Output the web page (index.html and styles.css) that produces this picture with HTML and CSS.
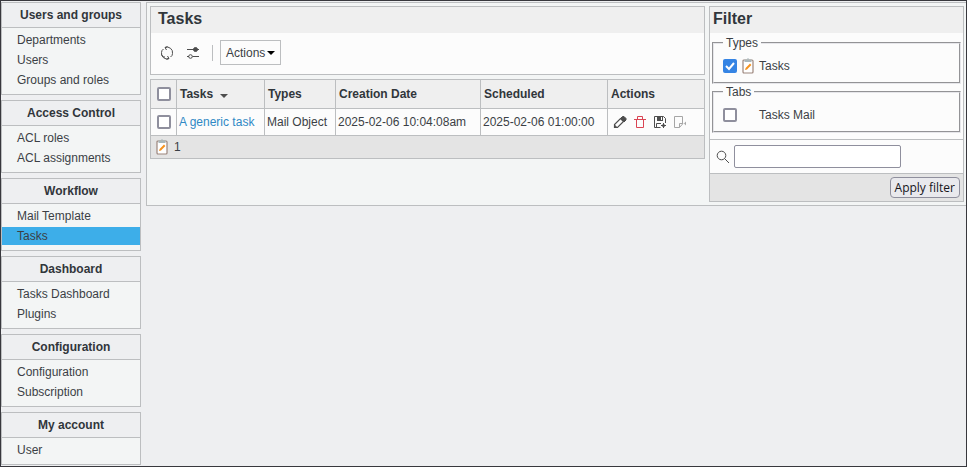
FILE: index.html
```html
<!DOCTYPE html>
<html lang="en">
<head>
    <meta charset="UTF-8">
    <meta name="viewport" content="width=device-width, initial-scale=1.0">
    <title>Tasks</title>
    <link rel="stylesheet" href="styles.css">
</head>
<body>

    <!-- Shared icons -->
    <svg class="icon-defs" aria-hidden="true">
        <symbol id="icon-task" viewBox="0 0 12 16">
            <rect x="1" y="2" width="10" height="13" rx="1" fill="#fff" stroke="#9c857c" stroke-width="1.2"/>
            <path d="M2.500 1.500h7v2.500h-7z" fill="#a9b7bb"/>
            <path d="M5 0.500h2v1H5z" fill="#a9b7bb"/>
            <path d="M3 12l.6-2L8 5.600l1.400 1.400L5 11.400z" fill="#f6921e"/>
        </symbol>
    </svg>

    <nav class="menu">
        <section class="menu-box">
            <h2>Users and groups</h2>
            <ul>
                <li><a href="#">Departments</a></li>
                <li><a href="#">Users</a></li>
                <li><a href="#">Groups and roles</a></li>
            </ul>
        </section>
        <section class="menu-box">
            <h2>Access Control</h2>
            <ul>
                <li><a href="#">ACL roles</a></li>
                <li><a href="#">ACL assignments</a></li>
            </ul>
        </section>
        <section class="menu-box">
            <h2>Workflow</h2>
            <ul>
                <li><a href="#">Mail Template</a></li>
                <li><a href="#" class="active">Tasks</a></li>
            </ul>
        </section>
        <section class="menu-box">
            <h2>Dashboard</h2>
            <ul>
                <li><a href="#">Tasks Dashboard</a></li>
                <li><a href="#">Plugins</a></li>
            </ul>
        </section>
        <section class="menu-box">
            <h2>Configuration</h2>
            <ul>
                <li><a href="#">Configuration</a></li>
                <li><a href="#">Subscription</a></li>
            </ul>
        </section>
        <section class="menu-box">
            <h2>My account</h2>
            <ul>
                <li><a href="#">User</a></li>
            </ul>
        </section>
    </nav>

    <main class="content">
        <div class="list">
            <header class="panel">
                <h1>Tasks</h1>
                <div class="toolbar">
                    <button type="button" class="icon-btn" aria-label="Reload">
                        <svg width="14" height="14" viewBox="0 0 14 14" fill="none" stroke="#4d4d4d">
                            <path d="M5 1.500A5.500 5.500 0 0 1 12.500 7.500L12 9.500M9 12.500A5.500 5.500 0 0 1 1.500 6.500L2 4.500"/>
                            <path d="M7.500 0.500L5 1.500 6.500 4M6.500 13.500L9 12.500 7.500 10"/>
                            <path d="M2 4.500L3.500 3M1.500 8.500l2 2.500H5M12 9.500L10.500 11"/>
                        </svg>
                    </button>
                    <button type="button" class="icon-btn" aria-label="Settings">
                        <svg width="14" height="14" viewBox="0 0 14 14" fill="none" stroke="#4d4d4d">
                            <path d="M1 3.500h12M1 10.500h2M6.500 10.500H13"/>
                            <circle cx="9.500" cy="3.500" r="2" fill="#4d4d4d"/>
                            <circle cx="4.500" cy="10.500" r="1.800"/>
                        </svg>
                    </button>
                    <span class="separator"></span>
                    <button type="button" class="actions-btn">Actions <span class="caret"></span></button>
                </div>
            </header>

            <table class="tasks">
                <colgroup>
                    <col class="col-check">
                    <col class="col-name">
                    <col class="col-type">
                    <col class="col-created">
                    <col class="col-scheduled">
                    <col>
                </colgroup>
                <thead>
                    <tr>
                        <th class="check"><input type="checkbox" aria-label="Select all"></th>
                        <th>Tasks <span class="caret sort"></span></th>
                        <th>Types</th>
                        <th>Creation Date</th>
                        <th>Scheduled</th>
                        <th>Actions</th>
                    </tr>
                </thead>
                <tbody>
                    <tr>
                        <td class="check"><input type="checkbox" aria-label="Select A generic task"></td>
                        <td><a href="#">A generic task</a></td>
                        <td>Mail Object</td>
                        <td>2025-02-06 10:04:08am</td>
                        <td>2025-02-06 01:00:00</td>
                        <td>
                            <div class="row-actions">
                                <button type="button" class="icon-btn" aria-label="Edit">
                                    <svg width="14" height="14" viewBox="0 0 14 14" fill="none" stroke="#4d4d4d">
                                        <path d="M1.500 12.500v-3L7.500 3.500l3 3-6 6z" stroke-width="1.200"/>
                                        <path d="M7.500 3.500l2-2H11l2 2V5l-2 2z" fill="#4d4d4d"/>
                                        <path d="M1.500 12.500v-2.500l2.500 2.500z" fill="#4d4d4d"/>
                                    </svg>
                                </button>
                                <button type="button" class="icon-btn" aria-label="Delete">
                                    <svg width="14" height="14" viewBox="0 0 14 14" fill="none" stroke="#da4453">
                                        <path d="M1 4.500h12M4.500 4V1.500h5V4M3.500 4.500v8h7v-8"/>
                                    </svg>
                                </button>
                                <button type="button" class="icon-btn" aria-label="Save snapshot">
                                    <svg width="14" height="14" viewBox="0 0 14 14" fill="none" stroke="#4d4d4d">
                                        <path d="M7.500 12.500h-6v-11h9l2 2V8M3.500 12V8.500H8"/>
                                        <path d="M4 1h6v5H4z" fill="#4d4d4d" stroke="none"/>
                                        <path d="M8.500 2v3" stroke="#fff"/>
                                        <circle cx="10.500" cy="10.500" r="1.500" fill="#4d4d4d" stroke="none"/>
                                        <path d="M10.500 8v5M8 10.500h5"/>
                                    </svg>
                                </button>
                                <button type="button" class="icon-btn" aria-label="Export" disabled>
                                    <svg width="14" height="14" viewBox="0 0 14 14" fill="none" stroke="#a6a6a6">
                                        <path d="M6.500 12.500h-5v-11h8V9M6.500 12.500v-4h3.500z"/>
                                        <path d="M11 8.500l2-2v4z" fill="#a6a6a6" stroke="none"/>
                                    </svg>
                                </button>
                            </div>
                        </td>
                    </tr>
                </tbody>
                <tfoot>
                    <tr>
                        <td colspan="6">
                            <div class="summary">
                                <svg width="12" height="16"><use href="#icon-task"/></svg>
                                <span>1</span>
                            </div>
                        </td>
                    </tr>
                </tfoot>
            </table>
        </div>

        <form class="panel filter">
            <h1>Filter</h1>
            <div class="filter-groups">
                <fieldset>
                    <legend>Types</legend>
                    <div class="option">
                        <input type="checkbox" id="filter-tasks" checked>
                        <svg width="12" height="16"><use href="#icon-task"/></svg>
                        <label for="filter-tasks">Tasks</label>
                    </div>
                </fieldset>
                <fieldset>
                    <legend>Tabs</legend>
                    <div class="option">
                        <input type="checkbox" id="filter-mail">
                        <span class="no-icon"></span>
                        <label for="filter-mail">Tasks Mail</label>
                    </div>
                </fieldset>
            </div>
            <div class="search">
                <label for="search-text" aria-label="Search">
                    <svg width="14" height="14" viewBox="0 0 14 14" fill="none" stroke="#4d4d4d">
                        <circle cx="5.500" cy="5.500" r="4.300"/>
                        <path d="M8.500 8.500l4.500 4.500"/>
                    </svg>
                </label>
                <input type="text" id="search-text">
            </div>
            <div class="filter-footer">
                <button type="submit" class="apply-btn">Apply filter</button>
            </div>
        </form>
    </main>

</body>
</html>
```

FILE: styles.css
```css
* {
    box-sizing: border-box;
}
body {
    display: flex;
    align-items: flex-start;
    gap: 5px;
    min-height: 100vh;
    margin: 0;
    padding: 1px 0;
    border: 1px solid #38383d;
    background-color: #eeeff1;
    color: #3b3f45;
    font-family: "Liberation Sans", Arial, sans-serif;
    font-size: 12px;
    line-height: 18px;
}
h1, h2, ul {
    margin: 0;
    padding: 0;
}
svg {
    display: block;
    flex: none;
}
.icon-defs {
    position: absolute;
    width: 0;
    height: 0;
}

/* Left menu */
.menu {
    display: flex;
    flex: none;
    flex-direction: column;
    gap: 5px;
    width: 140px;
}
.menu-box {
    border: 1px solid #bcbec0;
    background-color: #f3f5f5;
}
.menu-box h2 {
    border-bottom: 1px solid #bcbec0;
    background-color: #eeeff1;
    color: #31363b;
    font-size: 12px;
    line-height: 24px;
    text-align: center;
}
.menu-box ul {
    display: flex;
    flex-direction: column;
    gap: 2px;
    padding: 3px 0 5px;
    list-style: none;
}
.menu-box a {
    display: block;
    padding-left: 15px;
    color: #3b3f45;
    text-decoration: none;
}
.menu-box a.active {
    background-color: #3daee9;
}

/* Main area */
.content {
    display: flex;
    flex: 1;
    align-items: flex-start;
    gap: 4px;
    min-width: 0;
    padding: 3px 2px 3px 3px;
    border: 1px solid #bcbec0;
    border-right: none;
    background-color: #f3f5f5;
}
.list {
    display: flex;
    flex: 1;
    flex-direction: column;
    gap: 4px;
}
.panel {
    border: 1px solid #bcbec0;
    background-color: #fcfcfc;
}
.panel h1 {
    padding: 0 7px 2px;
    background-color: #efefef;
    color: #31363b;
    font-size: 16px;
    line-height: 24px;
}
.toolbar {
    display: flex;
    align-items: center;
    gap: 12px;
    padding: 7px 9px 9px;
}
.icon-btn {
    padding: 0;
    border: none;
    background: none;
}
.separator {
    width: 1px;
    height: 16px;
    background-color: #bcbec0;
}
.actions-btn {
    display: flex;
    align-items: center;
    gap: 2px;
    height: 25px;
    margin-left: -5px;
    padding: 0 5px;
    border: 1px solid #bcbec0;
    background-color: #fcfcfc;
    color: #3b3f45;
    font: inherit;
}
.caret {
    display: inline-block;
    border: 4px solid transparent;
    border-top-color: #000;
    border-bottom: none;
}
.sort {
    margin-left: 4px;
    border-top-color: #4d4d4d;
}

/* Task table */
.tasks {
    width: 100%;
    border-collapse: collapse;
    table-layout: fixed;
    background-color: #fcfcfc;
}
.tasks th, .tasks td {
    height: 27px;
    padding: 0 2px;
    border: 1px solid #bcbec0;
    text-align: left;
    white-space: nowrap;
}
.tasks th {
    height: 29px;
    padding: 0 3px;
    background-color: #efefef;
    color: #31363b;
}
.tasks .check {
    padding: 0 6px;
}
.tasks a {
    color: #2f89c5;
    text-decoration: none;
}
.tasks tfoot td {
    height: 23px;
    padding: 0 5px;
    background-color: #e4e4e4;
}
.col-check {
    width: 26px;
}
.col-name {
    width: 88px;
}
.col-type {
    width: 71px;
}
.col-created {
    width: 145px;
}
.col-scheduled {
    width: 127px;
}
.row-actions {
    display: flex;
    gap: 6px;
    padding-left: 3px;
}
.summary {
    display: flex;
    align-items: center;
    gap: 6px;
}

/* Check boxes */
input[type="checkbox"] {
    display: block;
    width: 14px;
    height: 14px;
    margin: 0;
    border: 2px solid #8f8f9d;
    border-radius: 2px;
    background-color: #fff;
    appearance: none;
}
input[type="checkbox"]:checked {
    border: none;
    background: #3584e4 url("data:image/svg+xml,%3Csvg xmlns='http://www.w3.org/2000/svg' viewBox='0 0 14 14'%3E%3Cpath d='M3 7l3 3 5-6' fill='none' stroke='white' stroke-width='2'/%3E%3C/svg%3E");
}

/* Filter */
.filter {
    flex: none;
    width: 255px;
}
.filter h1 {
    padding-left: 3px;
}
.filter-groups {
    padding: 2px 2px 6px;
}
fieldset {
    margin: 0;
    padding: 6px 9px 7px;
    border: 2px groove #e6e6ea;
}
legend {
    padding: 0 3px;
    line-height: 16px;
}
.option {
    display: flex;
    align-items: center;
    gap: 5px;
}
.no-icon {
    width: 12px;
}
.search {
    display: flex;
    align-items: center;
    gap: 4px;
    padding: 5px 6px;
    border-top: 1px solid #bcbec0;
}
.search input {
    width: 167px;
    height: 23px;
    padding: 1px 4px;
    border: 1px solid #8f8f9d;
    border-radius: 2px;
    background-color: #fff;
    font: inherit;
}
.filter-footer {
    display: flex;
    justify-content: flex-end;
    padding: 3px;
    border-top: 1px solid #bcbec0;
    background-color: #e4e4e4;
}
.apply-btn {
    height: 21px;
    padding: 0 4px;
    border: 1px solid #8f8f9d;
    border-radius: 4px;
    background-color: #e9e9ed;
    color: #15141a;
    font-family: "Open Sans", "Noto Sans", sans-serif;
    font-size: 12px;
    line-height: 18px;
}
```
